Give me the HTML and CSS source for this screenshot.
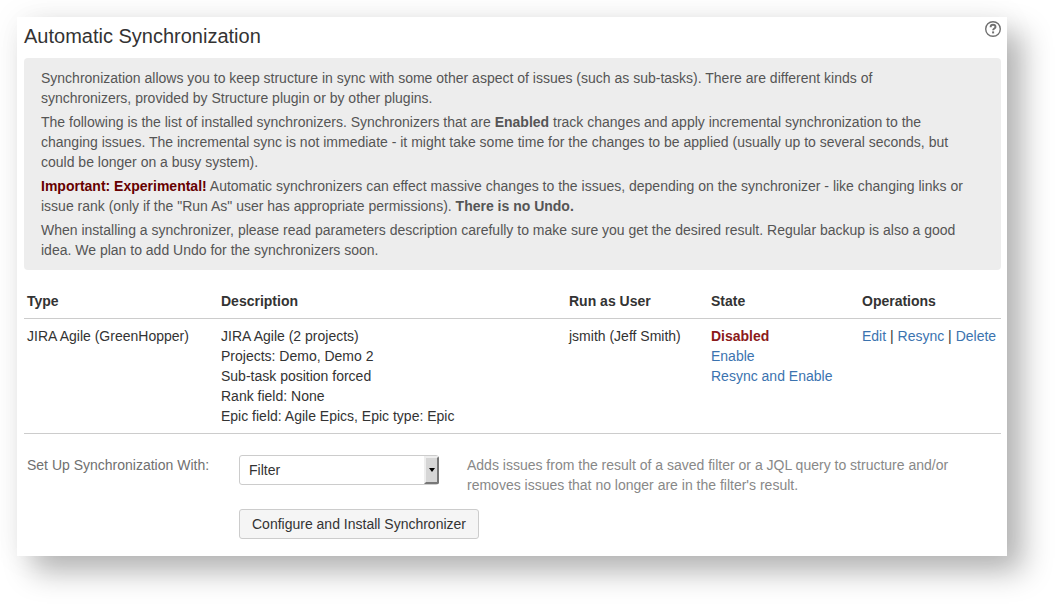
FILE: index.html
```html
<!DOCTYPE html>
<html lang="en">
<head>
<meta charset="utf-8">
<title>Automatic Synchronization</title>
<link rel="stylesheet" href="styles.css">
</head>
<body>
<main class="card">
  <header class="card-header">
    <h1 class="title">Automatic Synchronization</h1>
    <a class="help" href="#help" aria-label="Help">
      <svg width="16" height="16" viewBox="1 1 16 16" fill="none" stroke="#707070" aria-hidden="true">
        <circle cx="9" cy="9" r="7.3" stroke-width="1.4"/>
        <path d="M6.6 7.2C6.6 5.6 7.6 4.8 9 4.8s2.5.9 2.5 2.1c0 1.6-2.4 1.7-2.4 3.4" stroke-width="1.9"/>
        <path d="M8.1 11.4h2v2H8.1z" fill="#707070" stroke="none"/>
      </svg>
    </a>
  </header>

  <section class="info">
    <p>Synchronization allows you to keep structure in sync with some other aspect of issues (such as sub-tasks). There are different kinds of<br>synchronizers, provided by Structure plugin or by other plugins.</p>
    <p>The following is the list of installed synchronizers. Synchronizers that are <strong>Enabled</strong> track changes and apply incremental synchronization to the<br>changing issues. The incremental sync is not immediate - it might take some time for the changes to be applied (usually up to several seconds, but<br>could be longer on a busy system).</p>
    <p><strong class="warning">Important: Experimental!</strong> Automatic synchronizers can effect massive changes to the issues, depending on the synchronizer - like changing links or<br>issue rank (only if the "Run As" user has appropriate permissions). <strong>There is no Undo.</strong></p>
    <p>When installing a synchronizer, please read parameters description carefully to make sure you get the desired result. Regular backup is also a good<br>idea. We plan to add Undo for the synchronizers soon.</p>
  </section>

  <table class="sync-table">
    <thead>
      <tr>
        <th class="col-type" scope="col">Type</th>
        <th scope="col">Description</th>
        <th class="col-user" scope="col">Run as User</th>
        <th class="col-state" scope="col">State</th>
        <th class="col-ops" scope="col">Operations</th>
      </tr>
    </thead>
    <tbody>
      <tr>
        <td>JIRA Agile (GreenHopper)</td>
        <td>JIRA Agile (2 projects)<br>Projects: Demo, Demo 2<br>Sub-task position forced<br>Rank field: None<br>Epic field: Agile Epics, Epic type: Epic</td>
        <td>jsmith (Jeff Smith)</td>
        <td><strong class="disabled">Disabled</strong><br><a href="#enable">Enable</a><br><a href="#resync-enable">Resync and Enable</a></td>
        <td class="ops"><a href="#edit">Edit</a> | <a href="#resync">Resync</a> | <a href="#delete">Delete</a></td>
      </tr>
    </tbody>
  </table>

  <form class="setup">
    <label class="setup-label" for="kind">Set Up Synchronization With:</label>
    <div class="select-wrap">
      <select class="select" id="kind" aria-describedby="kind-hint">
        <option>Filter</option>
      </select>
      <span class="select-arrow"></span>
    </div>
    <p class="hint" id="kind-hint">Adds issues from the result of a saved filter or a JQL query to structure and/or<br>removes issues that no longer are in the filter's result.</p>
    <button class="button" type="button">Configure and Install Synchronizer</button>
  </form>
</main>
</body>
</html>
```

FILE: styles.css
```css
* {
  box-sizing: border-box;
}

body {
  margin: 0;
  padding: 17px 48px 48px 17px;
  background: #fff;
  color: #333;
  font: 14px/20px "Liberation Sans", Arial, sans-serif;
}

.card {
  padding: 3px 6px 17px 7px;
  background: #fff;
  box-shadow: 16px 16px 28px rgba(0, 0, 0, 0.28), 0 0 32px rgba(0, 0, 0, 0.06);
}

.card-header {
  display: flex;
  justify-content: space-between;
  align-items: flex-start;
}

.title {
  margin: 0;
  padding: 4px 0 10px;
  font-size: 20px;
  font-weight: 400;
  line-height: 24px;
}

.help {
  display: flex;
  padding-top: 1px;
}

.info {
  padding: 10px 17px;
  border-radius: 4px;
  background: #ededed;
  color: #555;
}

.info p {
  margin: 0 0 4px;
}

.info p:last-child {
  margin-bottom: 0;
}

.warning {
  color: #600;
}

a {
  color: #3b73af;
  text-decoration: none;
}

.sync-table {
  width: 100%;
  margin-top: 14px;
  border-collapse: separate;
  border-spacing: 0;
  table-layout: fixed;
}

.sync-table th,
.sync-table td {
  padding: 7px 0 7px 3px;
  border-bottom: 1px solid #ccc;
  text-align: left;
  vertical-align: top;
}

.col-type {
  width: 194px;
}

.col-user {
  width: 142px;
}

.col-state {
  width: 151px;
}

.col-ops {
  width: 142px;
}

.ops {
  white-space: nowrap;
}

.disabled {
  color: #8b1a1a;
}

.setup {
  display: grid;
  grid-template-columns: 184px 200px 1fr;
  column-gap: 28px;
  row-gap: 14px;
  padding: 21px 3px 0;
}

.setup-label {
  color: #707070;
}

.select-wrap {
  position: relative;
  height: 30px;
}

.select {
  width: 100%;
  height: 30px;
  padding: 0 20px 0 9px;
  border: 1px solid #ccc;
  border-radius: 3px;
  appearance: none;
  background: #fff;
  color: #333;
  font: inherit;
}

.select-arrow {
  position: absolute;
  top: 1px;
  right: 0;
  bottom: 1px;
  display: flex;
  align-items: center;
  justify-content: center;
  width: 15px;
  border: 2px solid;
  border-color: #eee #777 #777 #eee;
  border-radius: 0 2px 2px 0;
  background: #d6d6d6;
  pointer-events: none;
}

.select-arrow::after {
  border: 3px solid transparent;
  border-top: 4px solid #000;
  border-bottom: 0;
  content: "";
}

.hint {
  margin: 0;
  color: #888;
}

.button {
  grid-column: 2 / -1;
  justify-self: start;
  min-width: 240px;
  height: 30px;
  padding: 0 10px;
  border: 1px solid #ccc;
  border-radius: 3px;
  background: #f5f5f5;
  color: #333;
  font: inherit;
}
```
